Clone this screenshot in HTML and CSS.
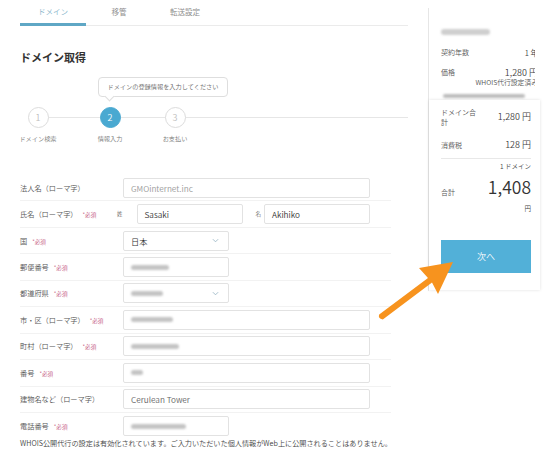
FILE: index.html
```html
<!DOCTYPE html>
<html lang="ja">
<head>
<meta charset="utf-8">
<title>ドメイン取得</title>
<link rel="stylesheet" href="styles.css">
</head>
<body>
<div class="page">
  <div class="main">
    <div class="tabs">
      <div class="tab active">ドメイン</div>
      <div class="tab">移管</div>
      <div class="tab">転送設定</div>
    </div>
    <h1 class="title">ドメイン取得</h1>
    <div class="tooltip">ドメインの登録情報を入力してください</div>
    <div class="steps">
      <div class="step s1"><div class="circle">1</div><div class="step-label">ドメイン検索</div></div>
      <div class="step s2"><div class="circle current">2</div><div class="step-label">情報入力</div></div>
      <div class="step s3"><div class="circle">3</div><div class="step-label">お支払い</div></div>
    </div>
    <div class="form">
      <div class="row">
        <div class="label">法人名（ローマ字）</div>
        <div class="input long ph">GMOinternet.inc</div>
      </div>
      <div class="row">
        <div class="label narrow">氏名（ローマ字）<span class="req">*必須</span></div>
        <span class="sub sei">姓</span>
        <div class="input half">Sasaki</div>
        <span class="sub mei">名</span>
        <div class="input half">Akihiko</div>
      </div>
      <div class="row">
        <div class="label">国<span class="req">*必須</span></div>
        <div class="input short select"><span>日本</span><svg class="chev" viewBox="0 0 8 5"><path d="M1 1 L4 4 L7 1" fill="none" stroke="#9bb7c6" stroke-width="1"/></svg></div>
      </div>
      <div class="row">
        <div class="label">郵便番号<span class="req">*必須</span></div>
        <div class="input short"><span class="blur w38"></span></div>
      </div>
      <div class="row">
        <div class="label">都道府県<span class="req">*必須</span></div>
        <div class="input short select"><span class="blur w32"></span><svg class="chev" viewBox="0 0 8 5"><path d="M1 1 L4 4 L7 1" fill="none" stroke="#9bb7c6" stroke-width="1"/></svg></div>
      </div>
      <div class="row">
        <div class="label">市・区（ローマ字）<span class="req">*必須</span></div>
        <div class="input long"><span class="blur w42"></span></div>
      </div>
      <div class="row">
        <div class="label">町村（ローマ字）<span class="req">*必須</span></div>
        <div class="input long"><span class="blur w48"></span></div>
      </div>
      <div class="row">
        <div class="label">番号<span class="req">*必須</span></div>
        <div class="input long"><span class="blur w12"></span></div>
      </div>
      <div class="row">
        <div class="label">建物名など（ローマ字）</div>
        <div class="input long muted">Cerulean Tower</div>
      </div>
      <div class="row last">
        <div class="label">電話番号<span class="req">*必須</span></div>
        <div class="input short"><span class="blur w55"></span></div>
      </div>
    </div>
    <p class="note">WHOIS公開代行の設定は有効化されています。ご入力いただいた個人情報がWeb上に公開されることはありません。</p>
  </div>

  <aside class="side">
    <div class="side-top">
      <div class="side-inner">
        <div class="blur blur-title"></div>
        <div class="srow r-years"><span class="slabel">契約年数</span><span class="sval">1 年</span></div>
        <div class="srow r-price"><span class="slabel">価格</span><span class="sval big">1,280 円</span></div>
        <div class="snote">WHOIS代行設定済み</div>
        <div class="blur blur-bar"></div>
      </div>
    </div>
    <div class="card">
      <div class="crow">
        <span class="clabel wrap">ドメイン合計</span>
        <span class="cval">1,280 円</span>
      </div>
      <div class="crow r-tax">
        <span class="clabel">消費税</span>
        <span class="cval">128 円</span>
      </div>
      <div class="divider"></div>
      <div class="total">
        <span class="clabel total-label">合計</span>
        <div class="total-right">
          <div class="per">1 ドメイン</div>
          <div class="amount">1,408</div>
          <div class="yen">円</div>
        </div>
      </div>
      <div class="next">次へ</div>
    </div>
  </aside>
</div>

<svg class="arrow" viewBox="0 0 551 450" width="551" height="450">
  <path d="M453 262 L419 268 L428 278 L379.2 314.6 Q377.6 318.6 382.8 319.4 L432 282.4 L438 294 Z" fill="#f7931e"/>
</svg>
</body>
</html>
```

FILE: styles.css
```css
* {
  box-sizing: border-box;
  margin: 0;
  padding: 0;
}

html,
body {
  width: 551px;
  height: 450px;
  overflow: hidden;
  background: #fff;
}

body {
  position: relative;
  font-family: "Noto Sans CJK JP", "Noto Sans", sans-serif;
  font-weight: 350;
  color: #444;
}

.page {
  display: flex;
  align-items: flex-start;
}

/* ---------- main column ---------- */
.main {
  flex: none;
  width: 388px;
  margin-left: 20px;
}

.tabs {
  display: flex;
  height: 26px;
  border-bottom: 1px solid #ebebeb;
}

.tab {
  width: 66px;
  padding-top: 7px;
  font-size: 7.5px;
  line-height: 10px;
  text-align: center;
  color: #8a8a8a;
}

.tab.active {
  color: #86b3c9;
  border-bottom: 3px solid #5fa7c5;
  margin-bottom: -1px;
}

.title {
  margin-top: 24px;
  font-size: 11px;
  line-height: 14px;
  font-weight: 700;
  color: #333;
}

.tooltip {
  position: relative;
  width: 130px;
  height: 20px;
  margin: 13px 0 0 78px;
  border: 1px solid #dedede;
  border-radius: 4px;
  font-size: 6.2px;
  line-height: 18px;
  text-align: center;
  color: #666;
  background: #fff;
}

.tooltip::after {
  content: "";
  position: absolute;
  left: 7px;
  bottom: -4px;
  width: 6px;
  height: 6px;
  background: #fff;
  border-right: 1px solid #dedede;
  border-bottom: 1px solid #dedede;
  transform: rotate(45deg);
}

.steps {
  position: relative;
  display: flex;
  margin-top: 10px;
}

.steps::before {
  content: "";
  position: absolute;
  left: 18px;
  right: 0;
  top: 10px;
  height: 1px;
  background: #e6e6e6;
}

.step {
  position: relative;
  width: 36px;
  display: flex;
  flex-direction: column;
  align-items: center;
}

.s2 {
  margin-left: 36px;
}

.s3 {
  margin-left: 29px;
}

.circle {
  width: 21px;
  height: 21px;
  border: 1px solid #dcdcdc;
  border-radius: 50%;
  background: #fff;
  font-size: 9px;
  line-height: 19px;
  text-align: center;
  color: #bdbdbd;
}

.circle.current {
  background: #4aa9d1;
  border-color: #4aa9d1;
  color: #fff;
}

.step-label {
  margin-top: 6px;
  font-size: 6.2px;
  line-height: 9px;
  white-space: nowrap;
  color: #777;
}

/* ---------- form ---------- */
.form {
  margin-top: 32px;
}

.row {
  display: flex;
  align-items: center;
  width: 371px;
  height: 26.45px;
  border-bottom: 1px solid #f2f2f2;
}

.row.last {
  border-bottom: none;
}

.label {
  flex: none;
  width: 103px;
  font-size: 7.2px;
  white-space: nowrap;
  color: #555;
}

.label.narrow {
  width: 97px;
}

.req {
  margin-left: 5px;
  font-size: 5.6px;
  color: #c2527c;
}

.sub {
  font-size: 5.5px;
  color: #666;
}

.sei {
  margin-right: 14px;
}

.mei {
  margin: 0 3px 0 13px;
}

.input {
  flex: none;
  display: flex;
  align-items: center;
  height: 20px;
  padding: 0 7px;
  border: 1px solid #e2e2e2;
  border-radius: 2px;
  font-size: 8.2px;
  color: #333;
}

.long {
  width: 247px;
}

.short {
  width: 106px;
}

.half {
  width: 106px;
}

.ph {
  color: #9a9a9a;
}

.muted {
  color: #666;
}

.select {
  justify-content: space-between;
}

.chev {
  width: 7px;
  height: 5px;
  margin-right: 2px;
}

.blur {
  display: block;
  height: 5px;
  border-radius: 3px;
  background: #c4c4c4;
  filter: blur(1.2px);
}

.w12 { width: 12px; }
.w32 { width: 32px; }
.w38 { width: 38px; }
.w42 { width: 42px; }
.w48 { width: 48px; }
.w55 { width: 55px; }

.note {
  font-size: 7.15px;
  line-height: 9px;
  white-space: nowrap;
  color: #444;
}

/* ---------- side summary ---------- */
.side {
  flex: none;
  width: 140px;
  margin: 8px 0 0 20px;
  border-left: 1px solid #e6e6e6;
  height: 283px;
}

.side-top {
  width: 106px;
  height: 92px;
  padding: 21px 0 0 12px;
  overflow: hidden;
}

.side-inner {
  width: 97px;
}

.blur-title {
  width: 49px;
  height: 6px;
  background: #cfcfcf;
}

.srow {
  display: flex;
  justify-content: space-between;
  align-items: center;
  height: 10px;
}

.r-years {
  margin-top: 12px;
}

.r-price {
  margin-top: 10px;
}

.slabel {
  font-size: 7px;
  color: #555;
}

.sval {
  font-size: 7.5px;
  white-space: nowrap;
  color: #444;
}

.sval.big {
  font-size: 9px;
}

.snote {
  margin-top: 1px;
  font-size: 6.8px;
  line-height: 9px;
  text-align: right;
  white-space: nowrap;
  color: #555;
}

.blur-bar {
  width: 82px;
  height: 4px;
  margin: 7px 0 0 2px;
  background: #bdbdbd;
}

.card {
  width: 111px;
  height: 190px;
  padding: 7px 9px 0 12px;
  background: #fff;
  box-shadow: 0 0 3px rgba(0, 0, 0, 0.13);
}

.crow {
  display: flex;
  justify-content: space-between;
  align-items: center;
}

.r-tax {
  margin-top: 12px;
}

.clabel {
  font-size: 7px;
  line-height: 10px;
  color: #555;
}

.clabel.wrap {
  width: 36px;
}

.cval {
  font-size: 9px;
  line-height: 12px;
  color: #444;
}

.divider {
  height: 1px;
  margin-top: 7px;
  background: #e8e8e8;
}

.total {
  display: flex;
  justify-content: space-between;
  align-items: flex-start;
}

.total-label {
  margin-top: 28px;
}

.total-right {
  text-align: right;
  color: #444;
}

.per {
  margin-top: 3px;
  font-size: 6.5px;
  line-height: 9px;
}

.amount {
  margin-top: 3px;
  font-size: 17.5px;
  line-height: 26px;
  color: #333;
}

.yen {
  margin-top: 4px;
  font-size: 6.5px;
  line-height: 9px;
}

.next {
  display: flex;
  align-items: center;
  justify-content: center;
  height: 33px;
  margin-top: 27px;
  background: #52b0d8;
  font-size: 9px;
  color: #fff;
}

/* ---------- overlay arrow ---------- */
.arrow {
  position: absolute;
  left: 0;
  top: 0;
  pointer-events: none;
}
```
